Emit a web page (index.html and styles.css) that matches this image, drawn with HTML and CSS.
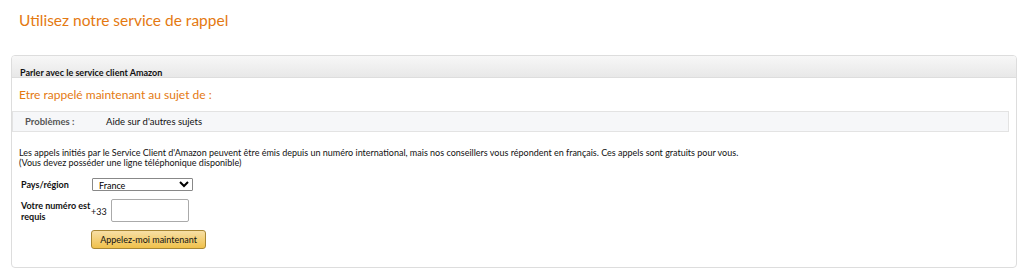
FILE: index.html
```html
<!DOCTYPE html>
<html>
<head>
	<meta charset="utf-8">
	<title>Service de rappel</title>
	<link rel="stylesheet" href="styles.css">
</head>
<body>
	<h1 class="page-title">Utilisez notre service de rappel</h1>

	<div class="box">
		<div class="box-header">Parler avec le service client Amazon</div>
		<div class="box-body">
			<h2 class="sub-title">Etre rappelé maintenant au sujet de :</h2>

			<div class="topic">
				<span class="topic-label">Problèmes :</span>
				<span class="topic-value">Aide sur d'autres sujets</span>
			</div>

			<p class="info">
				Les appels initiés par le Service Client d'Amazon peuvent être émis depuis un numéro international, mais nos conseillers vous répondent en français. Ces appels sont gratuits pour vous.<br>
				(Vous devez posséder une ligne téléphonique disponible)
			</p>

			<form class="call-form">
				<div class="row">
					<label for="country" class="row-label">Pays/région</label>
					<select id="country" class="country">
						<option>France</option>
					</select>
				</div>
				<div class="row">
					<label for="phone" class="row-label">Votre numéro est requis</label>
					<span class="prefix">+33</span>
					<input type="text" id="phone" class="phone">
				</div>
				<div class="row">
					<span class="row-label"></span>
					<button type="button" class="call-button">Appelez-moi maintenant</button>
				</div>
			</form>
		</div>
	</div>
</body>
</html>
```

FILE: styles.css
```css
body {
	font-family: Lato, "Open Sans", Arial, sans-serif;
	margin: 0;
	padding: 0 7px 0 11px;
	color: #111;
	background-color: #fff;
}

.page-title {
	font-size: 15.5px;
	font-weight: normal;
	color: #e47911;
	margin: 0;
	padding: 11px 0 0 8px;
	height: 44px;
}

.box {
	border: 1px solid #ddd;
	border-radius: 4px;
	height: 213px;
	box-sizing: border-box;
}

.box-header {
	height: 22px;
	box-sizing: border-box;
	padding: 11px 0 0 8px;
	font-size: 9px;
	font-weight: bold;
	color: #111;
	background: linear-gradient(#f7f7f7, #e8e8e8);
	border-bottom: 1px solid #ddd;
	border-radius: 3px 3px 0 0;
}

.box-body {
	padding: 0 7px 0 0;
}

.sub-title {
	font-size: 12px;
	font-weight: normal;
	color: #e47911;
	margin: 0;
	padding: 9px 0 0 7px;
	height: 24px;
}

.topic {
	display: flex;
	align-items: center;
	height: 21px;
	box-sizing: border-box;
	padding-left: 12px;
	background-color: #f6f7f9;
	border: 1px solid #e3e3e3;
	font-size: 9.5px;
}

.topic-label {
	width: 81px;
	font-weight: bold;
	color: #555;
}

.topic-value {
	color: #111;
}

.info {
	font-size: 9px;
	line-height: 10px;
	margin: 16px 0 0 7px;
}

.call-form {
	margin: 10px 0 0 9px;
	font-size: 9px;
}

.row {
	display: flex;
	align-items: center;
	margin-bottom: 8px;
}

.row-label {
	width: 70px;
	font-weight: bold;
	line-height: 11px;
}

.country {
	width: 101px;
	height: 13px;
	margin-left: 1px;
	font-family: Lato, "Open Sans", Arial, sans-serif;
	font-size: 9px;
	padding: 0 2px;
	border: 1px solid #888;
	border-radius: 1px;
	background-color: #fff;
}

.prefix {
	align-self: flex-end;
	margin-bottom: 5px;
	width: 20px;
}

.phone {
	width: 78px;
	height: 23px;
	box-sizing: border-box;
	border: 1px solid #aaa;
	border-radius: 2px;
}

.call-button {
	width: 115px;
	height: 19px;
	padding: 0;
	font-family: Lato, "Open Sans", Arial, sans-serif;
	font-size: 9px;
	color: #111;
	border: 1px solid #a88734;
	border-radius: 3px;
	background: linear-gradient(#f7dfa5, #f0c14b);
	cursor: pointer;
}
```
